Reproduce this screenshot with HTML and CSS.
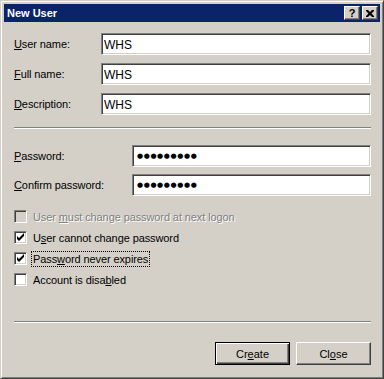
FILE: index.html
```html
<!DOCTYPE html>
<html lang="en">
<head>
    <meta charset="UTF-8">
    <title>New User</title>
    <link rel="stylesheet" href="styles.css">
</head>
<body>
    <div class="window">
        <div class="titlebar">
            <span class="title">New User</span>
            <div class="caption-buttons">
                <button class="caption-btn help">?</button>
                <button class="caption-btn close">
                    <svg width="8" height="7" viewBox="0 0 8 7"><path d="M0 0h2l2 2 2-2h2v1L5.5 3.5 8 6v1H6L4 5 2 7H0V6l2.5-2.5L0 1z" fill="#000"/></svg>
                </button>
            </div>
        </div>

        <div class="content">
            <div class="fields">
                <label class="label"><u>U</u>ser name:</label>
                <input class="edit" type="text" value="WHS">
                <label class="label"><u>F</u>ull name:</label>
                <input class="edit" type="text" value="WHS">
                <label class="label"><u>D</u>escription:</label>
                <input class="edit" type="text" value="WHS">
            </div>

            <div class="separator sep-top"></div>

            <div class="fields passwords">
                <label class="label"><u>P</u>assword:</label>
                <div class="edit pass">●●●●●●●●●</div>
                <label class="label"><u>C</u>onfirm password:</label>
                <div class="edit pass">●●●●●●●●●</div>
            </div>

            <div class="checks">
                <div class="check disabled">
                    <span class="box"></span>
                    <span class="text">User <u>m</u>ust change password at next logon</span>
                </div>
                <div class="check">
                    <span class="box checked"></span>
                    <span class="text">U<u>s</u>er cannot change password</span>
                </div>
                <div class="check">
                    <span class="box checked"></span>
                    <span class="text focus">Pass<u>w</u>ord never expires</span>
                </div>
                <div class="check">
                    <span class="box"></span>
                    <span class="text">Account is disa<u>b</u>led</span>
                </div>
            </div>

            <div class="separator sep-bottom"></div>

            <div class="actions">
                <button class="btn default">Cr<u>e</u>ate</button>
                <button class="btn">Cl<u>o</u>se</button>
            </div>
        </div>
    </div>
</body>
</html>
```

FILE: styles.css
```css
body {
    margin: 0;
    background-color: #d4d0c8;
    font-family: "Liberation Sans", Arial, sans-serif;
    font-size: 11px;
    letter-spacing: -0.1px;
    color: #000;
}

u {
    text-decoration: underline;
    text-underline-offset: 1px;
}

.window {
    width: 384px;
    height: 379px;
    box-sizing: border-box;
    background-color: #d4d0c8;
    border: 1px solid;
    border-color: #d4d0c8 #404040 #404040 #d4d0c8;
    box-shadow: inset 1px 1px #fff, inset -1px -1px #808080;
    padding: 3px;
}

.titlebar {
    height: 18px;
    background-color: #0a246a;
    display: flex;
    align-items: center;
    justify-content: space-between;
    padding: 0 2px 0 3px;
}

.title {
    color: #fff;
    font-weight: bold;
    font-size: 11px;
    letter-spacing: 0;
}

.caption-buttons {
    display: flex;
    gap: 2px;
}

.caption-btn {
    width: 16px;
    height: 14px;
    padding: 0;
    margin: 0;
    background-color: #d4d0c8;
    border: 1px solid;
    border-color: #fff #404040 #404040 #fff;
    box-shadow: inset -1px -1px #808080;
    display: flex;
    align-items: center;
    justify-content: center;
    font-family: "Liberation Sans", Arial, sans-serif;
    font-weight: bold;
    font-size: 11px;
    line-height: 1;
}

.close svg {
    display: block;
}

.content {
    padding: 11px 9px 0 10px;
}

.fields {
    display: grid;
    grid-template-columns: 87px 1fr;
    row-gap: 8px;
    align-items: center;
}

.passwords {
    grid-template-columns: 118px 1fr;
    row-gap: 7px;
    margin-top: 16px;
}

.label {
    white-space: nowrap;
}

.edit {
    box-sizing: border-box;
    height: 22px;
    margin: 0;
    padding: 1px 2px 0;
    background-color: #fff;
    border: 1px solid;
    border-color: #808080 #fff #fff #808080;
    box-shadow: inset 1px 1px #404040, inset -1px -1px #d4d0c8;
    font-family: "Liberation Sans", Arial, sans-serif;
    font-size: 12px;
    letter-spacing: 0;
    color: #000;
    outline: none;
}

.pass {
    display: flex;
    align-items: center;
    padding: 0 0 0 4px;
    font-family: "DejaVu Sans", sans-serif;
    font-size: 7px;
    letter-spacing: 0.6px;
}

.separator {
    height: 0;
    border-top: 1px solid #808080;
    border-bottom: 1px solid #fff;
}

.sep-top {
    margin-top: 12px;
}

.sep-bottom {
    margin-top: 31px;
}

.checks {
    margin-top: 10px;
}

.check {
    height: 21px;
    display: flex;
    align-items: center;
    gap: 4px;
}

.box {
    box-sizing: border-box;
    width: 13px;
    height: 13px;
    background-color: #fff;
    border: 1px solid;
    border-color: #808080 #fff #fff #808080;
    box-shadow: inset 1px 1px #404040, inset -1px -1px #d4d0c8;
    flex-shrink: 0;
}

.box.checked {
    background-image: url("data:image/svg+xml,%3Csvg xmlns='http://www.w3.org/2000/svg' width='11' height='11'%3E%3Cpath d='M2 4v3l2 2 5-5V1L4 6z' fill='%23000'/%3E%3C/svg%3E");
    background-repeat: no-repeat;
    background-position: 0 0;
}

.disabled .box {
    background-color: #d4d0c8;
}

.disabled .text {
    color: #808080;
    text-shadow: 1px 1px #fff;
}

.text {
    padding: 1px;
    border: 1px solid transparent;
    white-space: nowrap;
}

.text.focus {
    border: 1px dotted #000;
}

.actions {
    display: flex;
    justify-content: flex-end;
    gap: 6px;
    margin-top: 19px;
}

.btn {
    box-sizing: border-box;
    width: 75px;
    height: 23px;
    margin: 0;
    padding: 0;
    background-color: #d4d0c8;
    border: 1px solid;
    border-color: #fff #404040 #404040 #fff;
    box-shadow: inset -1px -1px #808080;
    font-family: "Liberation Sans", Arial, sans-serif;
    font-size: 11px;
    color: #000;
}

.btn.default {
    border: 1px solid #000;
    box-shadow: inset 1px 1px #fff, inset -1px -1px #404040, inset -2px -2px #808080;
}
```
